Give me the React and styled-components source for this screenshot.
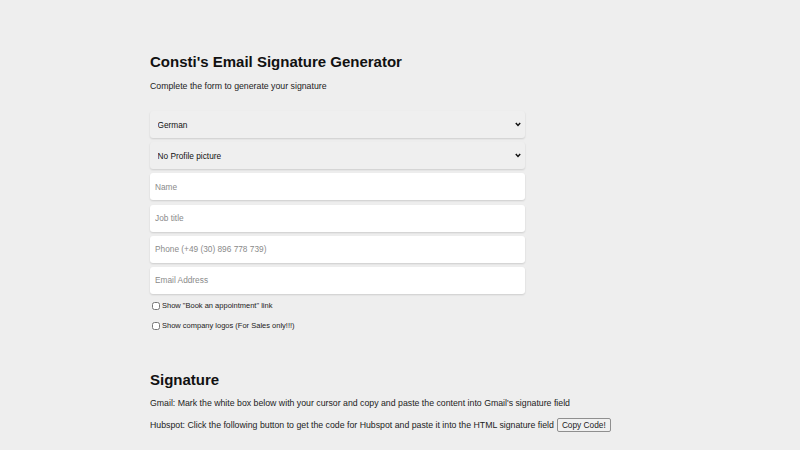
import React, { useState } from "react";
import styled, { createGlobalStyle } from "styled-components";

const GlobalStyle = createGlobalStyle`
  html, body {
    margin: 0;
    padding: 0;
    background: #eeeeee;
  }
  body {
    font-family: "Liberation Sans", Arial, Helvetica, sans-serif;
    color: #111;
  }
`;

const Page = styled.main`
  width: 500px;
  margin: 0 auto;
  padding-top: 52px;
`;

const Title = styled.h1`
  margin: 0;
  font-size: 15px;
  line-height: 19px;
  font-weight: 700;
  color: #111;
`;

const Text = styled.p`
  margin: ${({ $top }) => $top || 0}px 0 0;
  font-size: 8.75px;
  line-height: 12px;
  min-height: 12px;
  color: #222;
  display: flex;
  align-items: center;
  gap: 2px;
`;

const Form = styled.form`
  width: 375px;
  margin-top: 19px;
  display: flex;
  flex-direction: column;
  gap: 4.2px;
`;

const SelectWrap = styled.div`
  position: relative;
  height: 27px;
`;

const Select = styled.select`
  appearance: none;
  box-sizing: border-box;
  width: 100%;
  height: 27px;
  padding: 0 20px 0 7.5px;
  border: none;
  border-radius: 3px;
  background: #efefef;
  box-shadow: 0 1px 2px rgba(0, 0, 0, 0.14);
  font-family: "Liberation Sans", Arial, sans-serif;
  font-size: 8.3px;
  color: #111;
  outline: none;
`;

const Chevron = styled.svg`
  position: absolute;
  right: 4px;
  top: 10.5px;
  width: 6px;
  height: 5px;
  pointer-events: none;
`;

const Input = styled.input`
  box-sizing: border-box;
  width: 100%;
  height: 27px;
  padding: 0 5px;
  border: none;
  border-radius: 3px;
  background: #ffffff;
  box-shadow: 0 1px 2px rgba(0, 0, 0, 0.14);
  font-family: "Liberation Sans", Arial, sans-serif;
  font-size: 8.3px;
  color: #111;
  outline: none;

  &::placeholder {
    color: #8a8a8a;
  }
`;

const Check = styled.label`
  display: flex;
  align-items: center;
  gap: 2px;
  height: 9px;
  margin: ${({ $top }) => $top}px 0 0 2px;
  font-size: 7.5px;
  color: #222;

  input {
    width: 8px;
    height: 8px;
    margin: 0;
  }
`;

const Subtitle = styled.h2`
  margin: 40px 0 0;
  font-size: 15px;
  line-height: 19px;
  font-weight: 700;
  color: #111;
`;

const CopyButton = styled.button`
  height: 14px;
  padding: 0 4px;
  margin-left: 1px;
  font-family: "Liberation Sans", Arial, sans-serif;
  font-size: 8.3px;
  color: #222;
  background: #f0f0f0;
  border: 1px solid #8f8f8f;
  border-radius: 2px;
`;

function Dropdown({ value, onChange, children }) {
  return (
    <SelectWrap>
      <Select value={value} onChange={onChange}>
        {children}
      </Select>
      <Chevron viewBox="0 0 6 5">
        <polyline points="0.8,1 3,3.4 5.2,1" fill="none" stroke="#111" strokeWidth="1.5" />
      </Chevron>
    </SelectWrap>
  );
}

export default function App() {
  const [lang, setLang] = useState("de");
  const [pic, setPic] = useState("none");

  return (
    <>
      <GlobalStyle />
      <Page>
        <Title>Consti's Email Signature Generator</Title>
        <Text $top={9}>Complete the form to generate your signature</Text>

        <Form onSubmit={(e) => e.preventDefault()}>
          <Dropdown value={lang} onChange={(e) => setLang(e.target.value)}>
            <option value="de">German</option>
            <option value="en">English</option>
          </Dropdown>
          <Dropdown value={pic} onChange={(e) => setPic(e.target.value)}>
            <option value="none">No Profile picture</option>
            <option value="yes">Profile picture</option>
          </Dropdown>
          <Input placeholder="Name" />
          <Input placeholder="Job title" />
          <Input placeholder="Phone (+49 (30) 896 778 739)" />
          <Input placeholder="Email Address" />
        </Form>

        <Check $top={7.5}>
          <input type="checkbox" />
          Show "Book an appointment" link
        </Check>
        <Check $top={11}>
          <input type="checkbox" />
          Show company logos (For Sales only!!!)
        </Check>

        <Subtitle>Signature</Subtitle>
        <Text $top={7.5}>
          Gmail: Mark the white box below with your cursor and copy and paste the content into Gmail's signature field
        </Text>
        <Text $top={9}>
          Hubspot: Click the following button to get the code for Hubspot and paste it into the HTML signature field
          <CopyButton type="button">Copy Code!</CopyButton>
        </Text>
      </Page>
    </>
  );
}
